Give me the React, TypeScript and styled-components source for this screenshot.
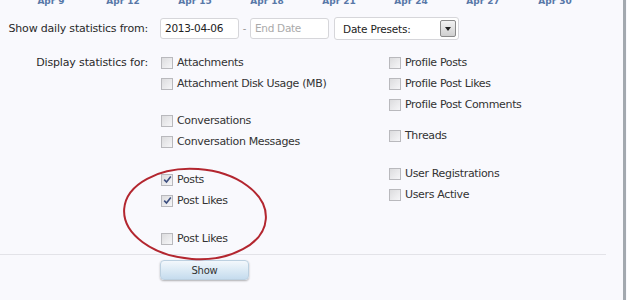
import styled, { createGlobalStyle } from "styled-components";

const GlobalStyle = createGlobalStyle`
  html, body {
    margin: 0;
    padding: 0;
    background: #f9f9fd;
    overflow: hidden;
  }
  body {
    font-family: "DejaVu Sans", Verdana, sans-serif;
    color: #333;
  }
`;

const Page = styled.div`
  position: relative;
  width: 623px;
  height: 300px;
  border-right: 3px solid #a3a9af;
  background: #f9f9fd;
`;

const Axis = styled.div`
  display: flex;
  height: 7px;
  padding-left: 15px;
  overflow: hidden;
`;

const Tick = styled.span`
  width: 72px;
  flex: none;
  text-align: center;
  font-size: 9px;
  line-height: 10px;
  margin-top: -4px;
  font-weight: bold;
  color: #5878a8;
`;

const Row = styled.div<{ $top: number }>`
  display: grid;
  grid-template-columns: 148px 1fr;
  column-gap: 12px;
  margin-top: ${(p) => p.$top}px;
`;

const Label = styled.div<{ $lead?: boolean }>`
  text-align: right;
  font-size: 11px;
  letter-spacing: ${(p) => (p.$lead ? "-0.2px" : "-0.15px")};
  color: #2a2a2a;
  line-height: ${(p) => (p.$lead ? "23px" : "21px")};
  white-space: nowrap;
`;

const Controls = styled.div`
  display: flex;
  align-items: center;
`;

const TextBox = styled.div<{ $placeholder?: boolean }>`
  box-sizing: border-box;
  width: 79px;
  height: 21px;
  border: 1px solid #d6d6da;
  border-radius: 3px;
  background: #fff;
  padding: 0 4px;
  font-size: 10.5px;
  letter-spacing: -0.3px;
  line-height: 19px;
  color: ${(p) => (p.$placeholder ? "#aaa" : "#222")};
`;

const Dash = styled.span`
  width: 11px;
  text-align: center;
  font-size: 10px;
  color: #999;
`;

const Select = styled.div`
  box-sizing: border-box;
  display: flex;
  align-items: center;
  justify-content: space-between;
  width: 125px;
  height: 23px;
  margin-left: 5px;
  padding: 0 2px 0 8px;
  border: 1px solid #d6d6da;
  border-radius: 3px;
  background: #fff;
  font-size: 10.5px;
  letter-spacing: -0.2px;
  color: #222;
`;

const ArrowBox = styled.span`
  box-sizing: border-box;
  display: flex;
  align-items: center;
  justify-content: center;
  width: 16px;
  height: 17px;
  border: 1px solid #8a8a8a;
  border-radius: 2px;
  background: linear-gradient(#f2f2f2, #cfcfcf);
  &::after {
    content: "";
    border-left: 3px solid transparent;
    border-right: 3px solid transparent;
    border-top: 4px solid #222;
  }
`;

const Columns = styled.div`
  display: grid;
  grid-template-columns: 228px auto;
`;

const Group = styled.div<{ $top?: number }>`
  margin-top: ${(p) => p.$top ?? 0}px;
`;

const CheckRow = styled.label`
  display: flex;
  align-items: center;
  gap: 4px;
  height: 21px;
  font-size: 11px;
  letter-spacing: -0.35px;
  color: #333;
  white-space: nowrap;
`;

const Box = styled.span`
  box-sizing: border-box;
  display: flex;
  align-items: center;
  justify-content: center;
  width: 12px;
  height: 12px;
  margin-left: 1px;
  border: 1px solid #b9b9bd;
  background: linear-gradient(135deg, #dcdcde, #f6f6f8);
`;

const Divider = styled.div`
  width: 606px;
  height: 1px;
  margin-top: 5px;
  background: #e3e3e8;
`;

const ShowButton = styled.button`
  display: block;
  width: 89px;
  height: 20px;
  margin: 5px 0 0 160px;
  padding: 0;
  border: 1px solid #bcd0e0;
  border-radius: 4px;
  background: linear-gradient(#f3f8fc, #c5dcee);
  box-shadow: 0 1px 2px rgba(0, 0, 0, 0.3);
  font-family: "DejaVu Sans", Verdana, sans-serif;
  font-size: 10px;
  letter-spacing: -0.2px;
  color: #333;
`;

const Circle = styled.svg`
  position: absolute;
  left: 0;
  top: 0;
  pointer-events: none;
`;

type Item = { label: string; checked?: boolean };

function Check({ label, checked }: Item) {
  return (
    <CheckRow>
      <Box>
        {checked && (
          <svg width="9" height="9" viewBox="0 0 9 9">
            <path d="M1.2 4.6 L3.5 7 L7.8 1.5" fill="none" stroke="#3d4f80" strokeWidth="1.6" />
          </svg>
        )}
      </Box>
      {label}
    </CheckRow>
  );
}

const left: { top: number; items: Item[] }[] = [
  { top: 0, items: [{ label: "Attachments" }, { label: "Attachment Disk Usage (MB)" }] },
  { top: 16, items: [{ label: "Conversations" }, { label: "Conversation Messages" }] },
  { top: 17, items: [{ label: "Posts", checked: true }, { label: "Post Likes", checked: true }] },
  { top: 17, items: [{ label: "Post Likes" }] },
];

const right: { top: number; items: Item[] }[] = [
  {
    top: 0,
    items: [{ label: "Profile Posts" }, { label: "Profile Post Likes" }, { label: "Profile Post Comments" }],
  },
  { top: 10, items: [{ label: "Threads" }] },
  { top: 17, items: [{ label: "User Registrations" }, { label: "Users Active" }] },
];

const ticks = ["Apr 9", "Apr 12", "Apr 15", "Apr 18", "Apr 21", "Apr 24", "Apr 27", "Apr 30"];

export default function App() {
  return (
    <Page>
      <GlobalStyle />
      <Axis>
        {ticks.map((t) => (
          <Tick key={t}>{t}</Tick>
        ))}
      </Axis>

      <Row $top={10}>
        <Label $lead>Show daily statistics from:</Label>
        <Controls>
          <TextBox>2013-04-06</TextBox>
          <Dash>-</Dash>
          <TextBox $placeholder>End Date</TextBox>
          <Select>
            Date Presets:
            <ArrowBox />
          </Select>
        </Controls>
      </Row>

      <Row $top={12}>
        <Label>Display statistics for:</Label>
        <Columns>
          <div>
            {left.map((g, i) => (
              <Group key={i} $top={g.top}>
                {g.items.map((it, j) => (
                  <Check key={j} {...it} />
                ))}
              </Group>
            ))}
          </div>
          <div>
            {right.map((g, i) => (
              <Group key={i} $top={g.top}>
                {g.items.map((it, j) => (
                  <Check key={j} {...it} />
                ))}
              </Group>
            ))}
          </div>
        </Columns>
      </Row>

      <Divider />
      <ShowButton>Show</ShowButton>

      <Circle width="623" height="300">
        <ellipse
          cx="195"
          cy="214"
          rx="71"
          ry="45"
          transform="rotate(4 195 214)"
          fill="none"
          stroke="#b3262f"
          strokeWidth="2"
        />
      </Circle>
    </Page>
  );
}
